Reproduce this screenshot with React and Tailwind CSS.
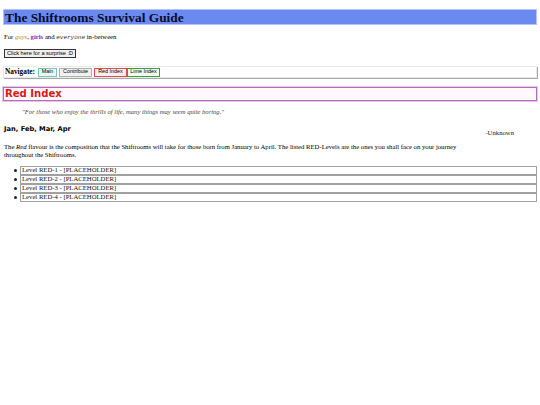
export default function App() {
  const levels = [1, 2, 3, 4];
  return (
    <div className="min-h-[405px] w-[540px] bg-white px-[3px] pt-[9px] font-['Liberation_Serif',serif] text-black">
      <h1 className="flex h-[16px] items-center border border-[#b4c4f4] bg-[#6a8aef] pl-[1px] text-[13.4px] font-bold leading-[15px] text-[#0b0b2e]">
        The Shiftrooms Survival Guide
      </h1>
      <p className="mt-[8px] pl-[1px] text-[6.7px] leading-[8px]">
        For{" "}
        <span className="italic text-[#c0844a]">guys</span>,{" "}
        <span className="font-bold text-[#7a28c0]">girls</span> and{" "}
        <span className="font-['Liberation_Mono',monospace] text-[6px] italic text-[#333]">everyone</span>{" "}
        in-between
      </p>
      <div className="mt-[7px] pl-[1px]">
        <button className="flex h-[9px] w-[72px] items-center justify-center border border-[#333] bg-[#efefef] font-['Liberation_Sans',sans-serif] text-[5.6px] leading-none text-black">
          Click here for a surprise :D
        </button>
      </div>
      <div className="mt-[8px] flex h-[12px] items-center gap-[2px] border border-[#eaeaea] pl-[1px] shadow-[1px_1px_0_#a8a8a8]">
        <span className="mr-[1px] text-[7.3px] font-bold leading-none">Navigate:</span>
        <span className="flex h-[9px] w-[19px] items-center justify-center border border-[#7cc4c0] bg-[#e6f8f6] font-['Liberation_Sans',sans-serif] text-[5.4px] leading-none">Main</span>
        <span className="flex h-[9px] w-[33px] items-center justify-center border border-[#b0b0b0] bg-[#f0f0f0] font-['Liberation_Sans',sans-serif] text-[5.4px] leading-none">Contribute</span>
        <span className="-mr-[2px] flex h-[9px] w-[33px] items-center justify-center border border-[#d45050] bg-[#fcecec] font-['Liberation_Sans',sans-serif] text-[5.4px] leading-none">Red Index</span>
        <span className="flex h-[9px] w-[33px] items-center justify-center border border-[#3e9e3e] bg-[#f0fcee] font-['Liberation_Sans',sans-serif] text-[5.4px] leading-none">Lime Index</span>
      </div>
      <h2 className="mt-[9px] flex h-[14px] items-center border border-[#b070b8] bg-[#fff8fd] pl-[1px] font-['DejaVu_Sans',sans-serif] text-[10.1px] font-bold leading-none text-[#d81818] shadow-[0_0_0_1px_#ecc4ec]">
        Red Index
      </h2>
      <p className="mt-[7px] pl-[19px] text-[6.6px] italic leading-[8px] text-[#444]">
        "For those who enjoy the thrills of life, many things may seem quite boring."
      </p>
      <div className="mt-[9px] flex items-start justify-between pl-[1px] pr-[23px]">
        <h4 className="font-['DejaVu_Sans',sans-serif] text-[6.7px] font-bold leading-[8px]">Jan, Feb, Mar, Apr</h4>
        <span className="mt-[4px] text-[6.7px] leading-[8px] text-[#222]">-Unknown</span>
      </div>
      <p className="mt-[6px] w-[475px] pl-[1px] text-[6.7px] leading-[7.5px]">
        The <span className="italic">Red</span> flavour is the composition that the Shiftrooms will take for those born from January to April. The listed RED-Levels are the ones you shall face on your journey throughout the Shiftrooms.
      </p>
      <ul className="mt-[8px] flex flex-col pl-[17px]">
        {levels.map((n) => (
          <li key={n} className="relative flex h-[9px] items-center border border-[#a0a0a0] pl-[1px] text-[6.7px] leading-none text-[#111]">
            <span className="absolute -left-[7px] top-[2px] h-[3px] w-[3px] rounded-full bg-[#222]"></span>
            Level RED-{n} - [PLACEHOLDER]
          </li>
        ))}
      </ul>
    </div>
  );
}
